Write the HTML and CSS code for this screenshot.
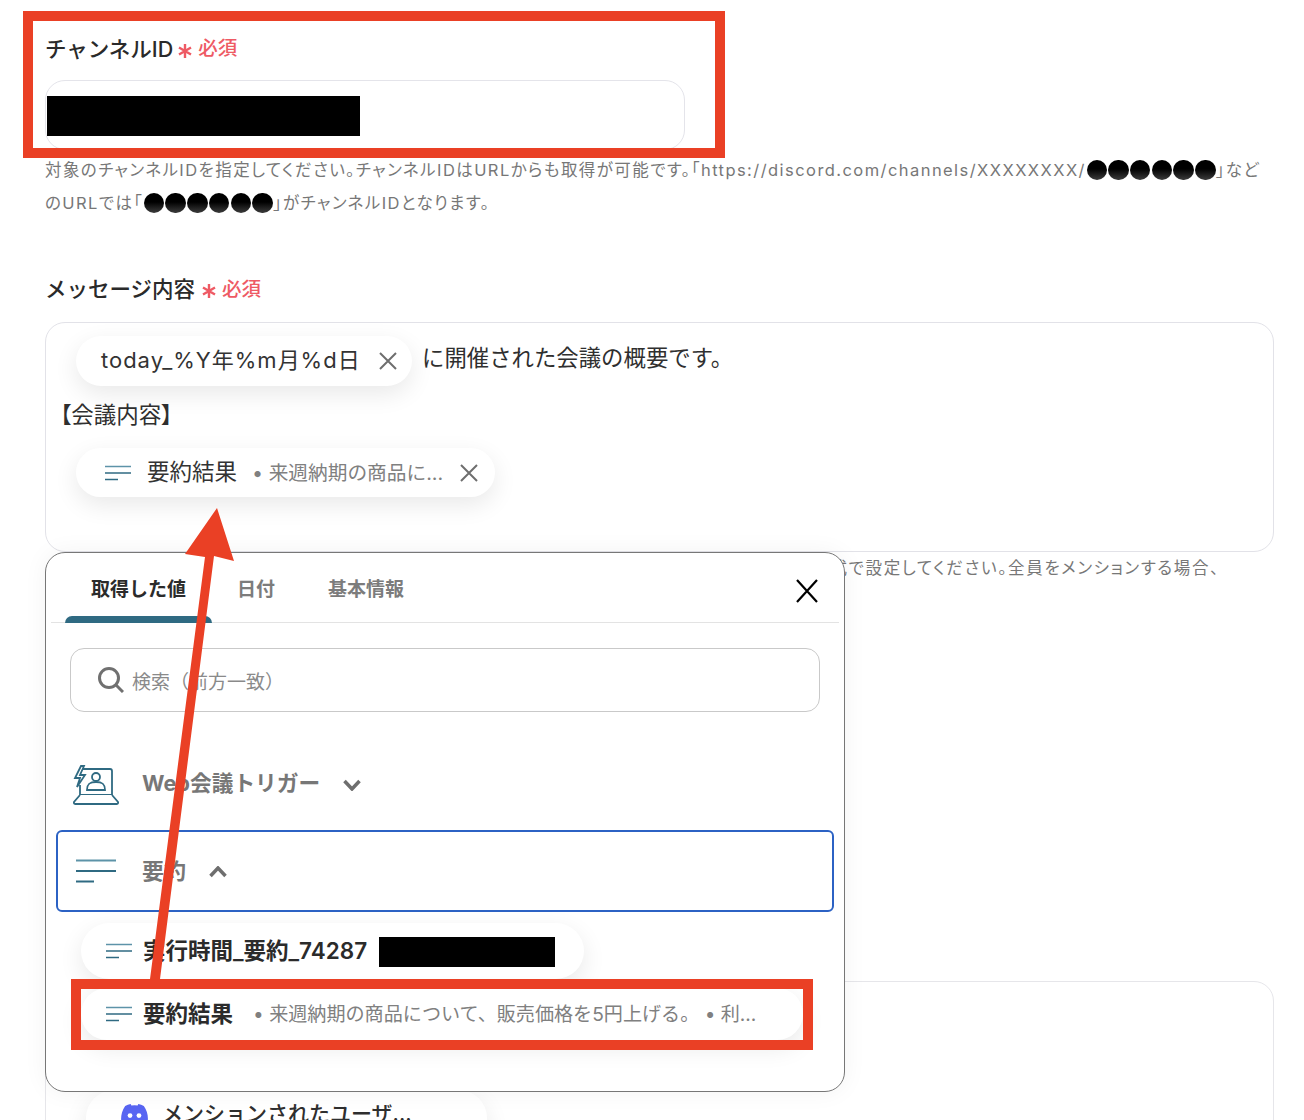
FILE: index.html
```html
<!DOCTYPE html>
<html lang="ja">
<head>
<meta charset="utf-8">
<title>Discord 設定</title>
<link rel="stylesheet" href="styles.css">
</head>
<body>
<main class="page">
  <section class="field first">
    <div class="label">チャンネルID<svg class="star" viewBox="0 0 14 14"><path d="M7 0v14M1 3.500l12 7M13 3.500l-12 7"/></svg><span class="req">必須</span></div>
    <div class="input"><div class="mask mask-id"></div></div>
    <p class="help">対象のチャンネルIDを指定してください。チャンネルIDはURLからも取得が可能です。「https://discord.com/channels/XXXXXXXX/<span class="ball"></span><span class="ball"></span><span class="ball"></span><span class="ball"></span><span class="ball"></span><span class="ball"></span>」などのURLでは「<span class="ball"></span><span class="ball"></span><span class="ball"></span><span class="ball"></span><span class="ball"></span><span class="ball"></span>」がチャンネルIDとなります。</p>
  </section>
  <section class="field second">
    <div class="label">メッセージ内容<svg class="star" viewBox="0 0 14 14"><path d="M7 0v14M1 3.500l12 7M13 3.500l-12 7"/></svg><span class="req">必須</span></div>
    <div class="textarea">
      <div class="line line-a">
        <span class="chip chip-date"><span class="chip-text">today_%Y年%m月%d日</span><svg class="x" viewBox="0 0 20 20"><path d="M2 2l16 16M18 2L2 18"/></svg></span>
        <span class="after">に開催された会議の概要です。</span>
      </div>
      <div class="heading">【会議内容】</div>
      <div class="line">
        <span class="chip chip-sum">
          <svg class="lines" viewBox="0 0 26 16"><path class="l1" d="M0 1.500h26"/><path class="l2" d="M0 8h26"/><path class="l3" d="M0 14.500h13"/></svg>
          <span class="chip-name">要約結果</span><span class="chip-val chip-val-lg">• 来週納期の商品に...</span>
          <svg class="x x2" viewBox="0 0 20 20"><path d="M2 2l16 16M18 2L2 18"/></svg>
        </span>
      </div>
    </div>
    <div class="help2"><span class="help2-text">メンションを送信する場合は、対象のユーザーIDを＜@ユーザーID＞の形式で設定してください。全員をメンションする場合、</span></div>
  </section>
  <section class="lower">
    <div class="chip chip-discord">
      <svg class="discord" viewBox="0 0 26 20"><path d="M22 1.700A21 21 0 0 0 16.700 0l-.7 1.400a20 20 0 0 0-6 0L9.300 0A21 21 0 0 0 4 1.700C.7 6.600-.2 11.400.2 16.100A21 21 0 0 0 6.700 19.400l1.400-2.200-2-1 .5-.4a15 15 0 0 0 12.800 0l.5.400-2 1 1.400 2.200a21 21 0 0 0 6.500-3.300C26.300 10.700 25 6 22 1.700z"/><circle class="eye" cx="8.700" cy="11" r="2.300"/><circle class="eye" cx="17.300" cy="11" r="2.300"/></svg>
      <span class="chip-name">メンションされたユーザ...</span>
    </div>
  </section>
</main>

<aside class="panel">
  <header class="tabs">
    <span class="tab active">取得した値</span>
    <span class="tab">日付</span>
    <span class="tab">基本情報</span>
    <svg class="close" viewBox="0 0 24 24"><path d="M2 1l20 22M22 1L2 23"/></svg>
  </header>
  <div class="search">
    <svg class="glass" viewBox="0 0 26 26"><circle cx="11" cy="11" r="9.500"/><path d="M18 18l7 7"/></svg>
    <span>検索（前方一致）</span>
  </div>
  <div class="group group-web">
    <svg class="web-icon" viewBox="0 0 46 40">
      <path d="M6 4h31a2 2 0 0 1 2 2v24H7V20"/>
      <path d="M7 30L1 37a1.500 1.500 0 0 0 1 2h42a1.500 1.500 0 0 0 1-2l-6-7"/>
      <path d="M8 1L2 13h5l-3 9 8-12H7l4-9z"/>
      <circle cx="23" cy="12" r="4"/>
      <path d="M14 25c0-7 4-8 9-8s9 1 9 8z"/>
    </svg>
    <span class="group-name">Web会議トリガー</span>
    <svg class="chev" viewBox="0 0 18 12"><path d="M1.500 2L9 10l7.500-8"/></svg>
  </div>
  <div class="group group-sel">
    <svg class="lines lines-lg" viewBox="0 0 40 24"><path class="l1" d="M0 1.500h40"/><path class="l2" d="M0 12h40"/><path class="l3" d="M0 22.500h18"/></svg>
    <span class="group-name">要約</span>
    <svg class="chev" viewBox="0 0 18 12"><path d="M1.500 10L9 2l7.500 8"/></svg>
  </div>
  <div class="item item-a">
    <svg class="lines" viewBox="0 0 26 16"><path class="l1" d="M0 1.500h26"/><path class="l2" d="M0 8h26"/><path class="l3" d="M0 14.500h13"/></svg>
    <span class="item-name">実行時間_要約_74287</span>
    <div class="mask mask-time"></div>
  </div>
  <div class="item item-b">
    <svg class="lines" viewBox="0 0 26 16"><path class="l1" d="M0 1.500h26"/><path class="l2" d="M0 8h26"/><path class="l3" d="M0 14.500h13"/></svg>
    <span class="item-name">要約結果</span>
    <span class="chip-val item-val">• 来週納期の商品について、販売価格を5円上げる。 • 利...</span>
  </div>
</aside>

<div class="mark mark-top"></div>
<div class="mark mark-item"></div>
<svg class="arrow" viewBox="0 0 1304 1120"><polygon points="150,979 160,979 214,556 234,561 217,508 185,554 205,557"/></svg>
</body>
</html>
```
FILE: styles.css
```css
* { box-sizing: border-box; }
html, body { margin: 0; height: 1120px; overflow: hidden; background: #fff; }
body {
  position: relative;
  font-family: Inter, "Noto Sans CJK JP", "Noto Sans", sans-serif;
  color: #2b2b2b;
}
.page { padding: 0 30px 0 45px; }
.field.first { padding-top: 33px; }
.field.second { margin-top: 53px; }

.label { display: flex; align-items: center; font-size: 21.500px; line-height: 32px; font-weight: 500; height: 32px; color: #2a2a2a; }
.star { width: 14px; height: 14px; margin: 4px 6px 0 5px; flex: none; }
.star path { fill: none; stroke: #ee5a64; stroke-width: 2.400; }
.req { color: #ee5a64; font-size: 19.500px; margin-top: -3px; }
.second .req { margin-top: 0; }
.second .star { margin-left: 7px; }

.input {
  width: 640px; height: 70px; margin-top: 15px;
  border: 1px solid #e4e4ea; border-radius: 20px;
  padding: 15px 1px;
}
.mask { background: #000; }
.mask-id { width: 313px; height: 40px; }

.help { margin: 4px 0 0; font-size: 16.500px; line-height: 33px; color: #777; letter-spacing: .087em; font-feature-settings: "palt"; }
.ball {
  display: inline-block; width: 20.500px; height: 20.500px; margin: 0 .6px; vertical-align: -4px;
  border-radius: 50%;
  background: linear-gradient(#000 45%, #3c3c3c);
}

.textarea {
  height: 230px; margin-top: 17px;
  border: 1px solid #e2e2e8; border-radius: 20px;
  padding: 13px 30px 0 14px;
}
.line { display: flex; align-items: center; }
.line-a { height: 50px; }
.chip {
  display: inline-flex; align-items: center;
  background: #fff; border-radius: 26px;
  box-shadow: 0 8px 24px rgba(0,0,0,.09);
  margin-left: 16px;
}
.chip-date {
  width: 336px; height: 50px; padding-left: 25px;
  font-size: 22px; color: #333; white-space: nowrap;
}
.chip-text { letter-spacing: .045em; margin-bottom: 7px; }
.after { margin: 0 0 10px 10px; font-size: 22.400px; color: #2f2f2f; }
.heading { margin-top: 14px; font-size: 22.500px; line-height: 30px; color: #2f2f2f; font-feature-settings: "palt"; }
.textarea .line:last-child { margin-top: 18px; }
.chip-sum { width: 419px; height: 49px; padding-left: 29px; }
.chip-name { margin: 0 0 5px 16px; font-size: 22.500px; color: #333; white-space: nowrap; }
.chip-val { margin: 0 0 3px 15px; font-size: 19px; color: #808080; white-space: nowrap; }
.chip-val-lg { font-size: 19.700px; }
.x { width: 20px; height: 20px; margin-left: 17px; flex: none; }
.x path { stroke: #6e6e6e; stroke-width: 2; fill: none; }
.x2 { margin-left: 16px; }

.lines { width: 26px; height: 16px; flex: none; }
.lines path { fill: none; stroke-width: 1.500; }
.l1 { stroke: #5d93a8; }
.l2 { stroke: #2f6a82; }
.l3 { stroke: #2f6a82; }

.help2 {
  display: flex; justify-content: flex-end;
  width: 1175px; height: 33px; overflow: hidden;
  font-size: 16.500px; line-height: 33px; color: #777;
  letter-spacing: .1em; font-feature-settings: "palt"; white-space: nowrap;
}
.help2-text { flex: none; }

.lower {
  position: relative; margin-top: 396px; height: 300px;
  border: 1px solid #e6e6ea; border-radius: 20px;
}
.chip-discord {
  position: absolute; left: 40px; top: 108px;
  width: 401px; height: 60px; padding: 0 0 12px 35px; margin: 0;
  border-radius: 28px;
}
.discord { width: 27px; height: 21px; flex: none; }
.discord path { fill: #5865f2; }
.discord .eye { fill: #fff; }
.chip-discord .chip-name { margin-left: 14px; font-size: 21px; font-weight: 500; color: #2f2f2f; }

.panel {
  position: absolute; left: 45px; top: 552px;
  width: 800px; height: 540px;
  background: #fff; border: 1px solid #777; border-radius: 20px;
  padding: 0 5px;
  box-shadow: 0 0 24px rgba(0,0,0,.05);
}
.tabs {
  position: relative; display: flex; align-items: center;
  height: 70px; padding-left: 40px; border-bottom: 1px solid #e3e3e3;
  font-size: 19px; font-weight: 700; color: #7c7c7c;
}
.tab { position: relative; height: 70px; line-height: 73px; margin-right: 53px; white-space: nowrap; }
.tab.active { color: #2b2b2b; margin-right: 51px; }
.tab.active::after {
  content: ""; position: absolute; left: -26px; right: -26px; bottom: 0; height: 7px;
  background: #2f6a82; border-radius: 7px 7px 0 0;
}
.close { position: absolute; right: 20px; top: 26px; width: 24px; height: 24px; }
.close path { stroke: #000; stroke-width: 2.200; fill: none; }

.search {
  display: flex; align-items: center;
  width: 750px; height: 64px; margin: 25px 0 0 19px;
  border: 1px solid #c9c9c9; border-radius: 14px;
  padding-left: 27px; font-size: 19px; color: #8a8a8a;
}
.glass { width: 26px; height: 26px; margin-right: 8px; flex: none; }
.glass circle, .glass path { fill: none; stroke: #707070; stroke-width: 3; }

.group { display: flex; align-items: center; }
.group-name { font-size: 22px; font-weight: 700; color: #777; white-space: nowrap; margin-bottom: 4px; }
.chev { width: 18px; height: 12px; flex: none; }
.chev path { fill: none; stroke: #6e6e6e; stroke-width: 3.500; }
.group-web { height: 46px; margin: 50px 0 0 22px; }
.group-web .group-name { font-size: 21.700px; margin-bottom: 7px; }
.web-icon { width: 46px; height: 40px; margin-right: 23px; flex: none; }
.web-icon path, .web-icon circle { fill: #fff; stroke: #2f6a82; stroke-width: 1.800; }
.group-web .chev { margin-left: 23px; }
.group-sel {
  width: 778px; height: 82px; margin: 22px 0 0 5px;
  border: 2.500px solid #2c62c4; border-radius: 6px;
  padding-left: 18px;
}
.lines-lg { width: 40px; height: 24px; margin-right: 26px; }
.lines-lg path { stroke-width: 2; }
.group-sel .chev { margin-left: 23px; margin-top: 2px; }

.item {
  display: flex; align-items: center;
  margin-left: 30px; background: #fff; border-radius: 28px;
  box-shadow: 0 8px 24px rgba(0,0,0,.09);
  padding-left: 25px;
}
.item-a { width: 503px; height: 56px; margin-top: 11px; }
.item-b { width: 722px; height: 52px; margin-top: 9px; }
.item-name { margin: 0 0 4px 11px; font-size: 22.500px; font-weight: 600; color: #2b2b2b; white-space: nowrap; }
.item-val { margin-left: 20px; margin-bottom: 2px; font-size: 19.100px; }
.mask-time { width: 176px; height: 30px; margin: 2px 0 0 12px; }

.mark { position: absolute; border: 10px solid #ea4025; }
.mark-top { left: 23px; top: 11px; width: 702px; height: 147px; }
.mark-item { left: 71px; top: 979px; width: 742px; height: 71px; }
.arrow { position: absolute; left: 0; top: 0; width: 1304px; height: 1120px; pointer-events: none; }
.arrow polygon { fill: #ea4025; }
```
